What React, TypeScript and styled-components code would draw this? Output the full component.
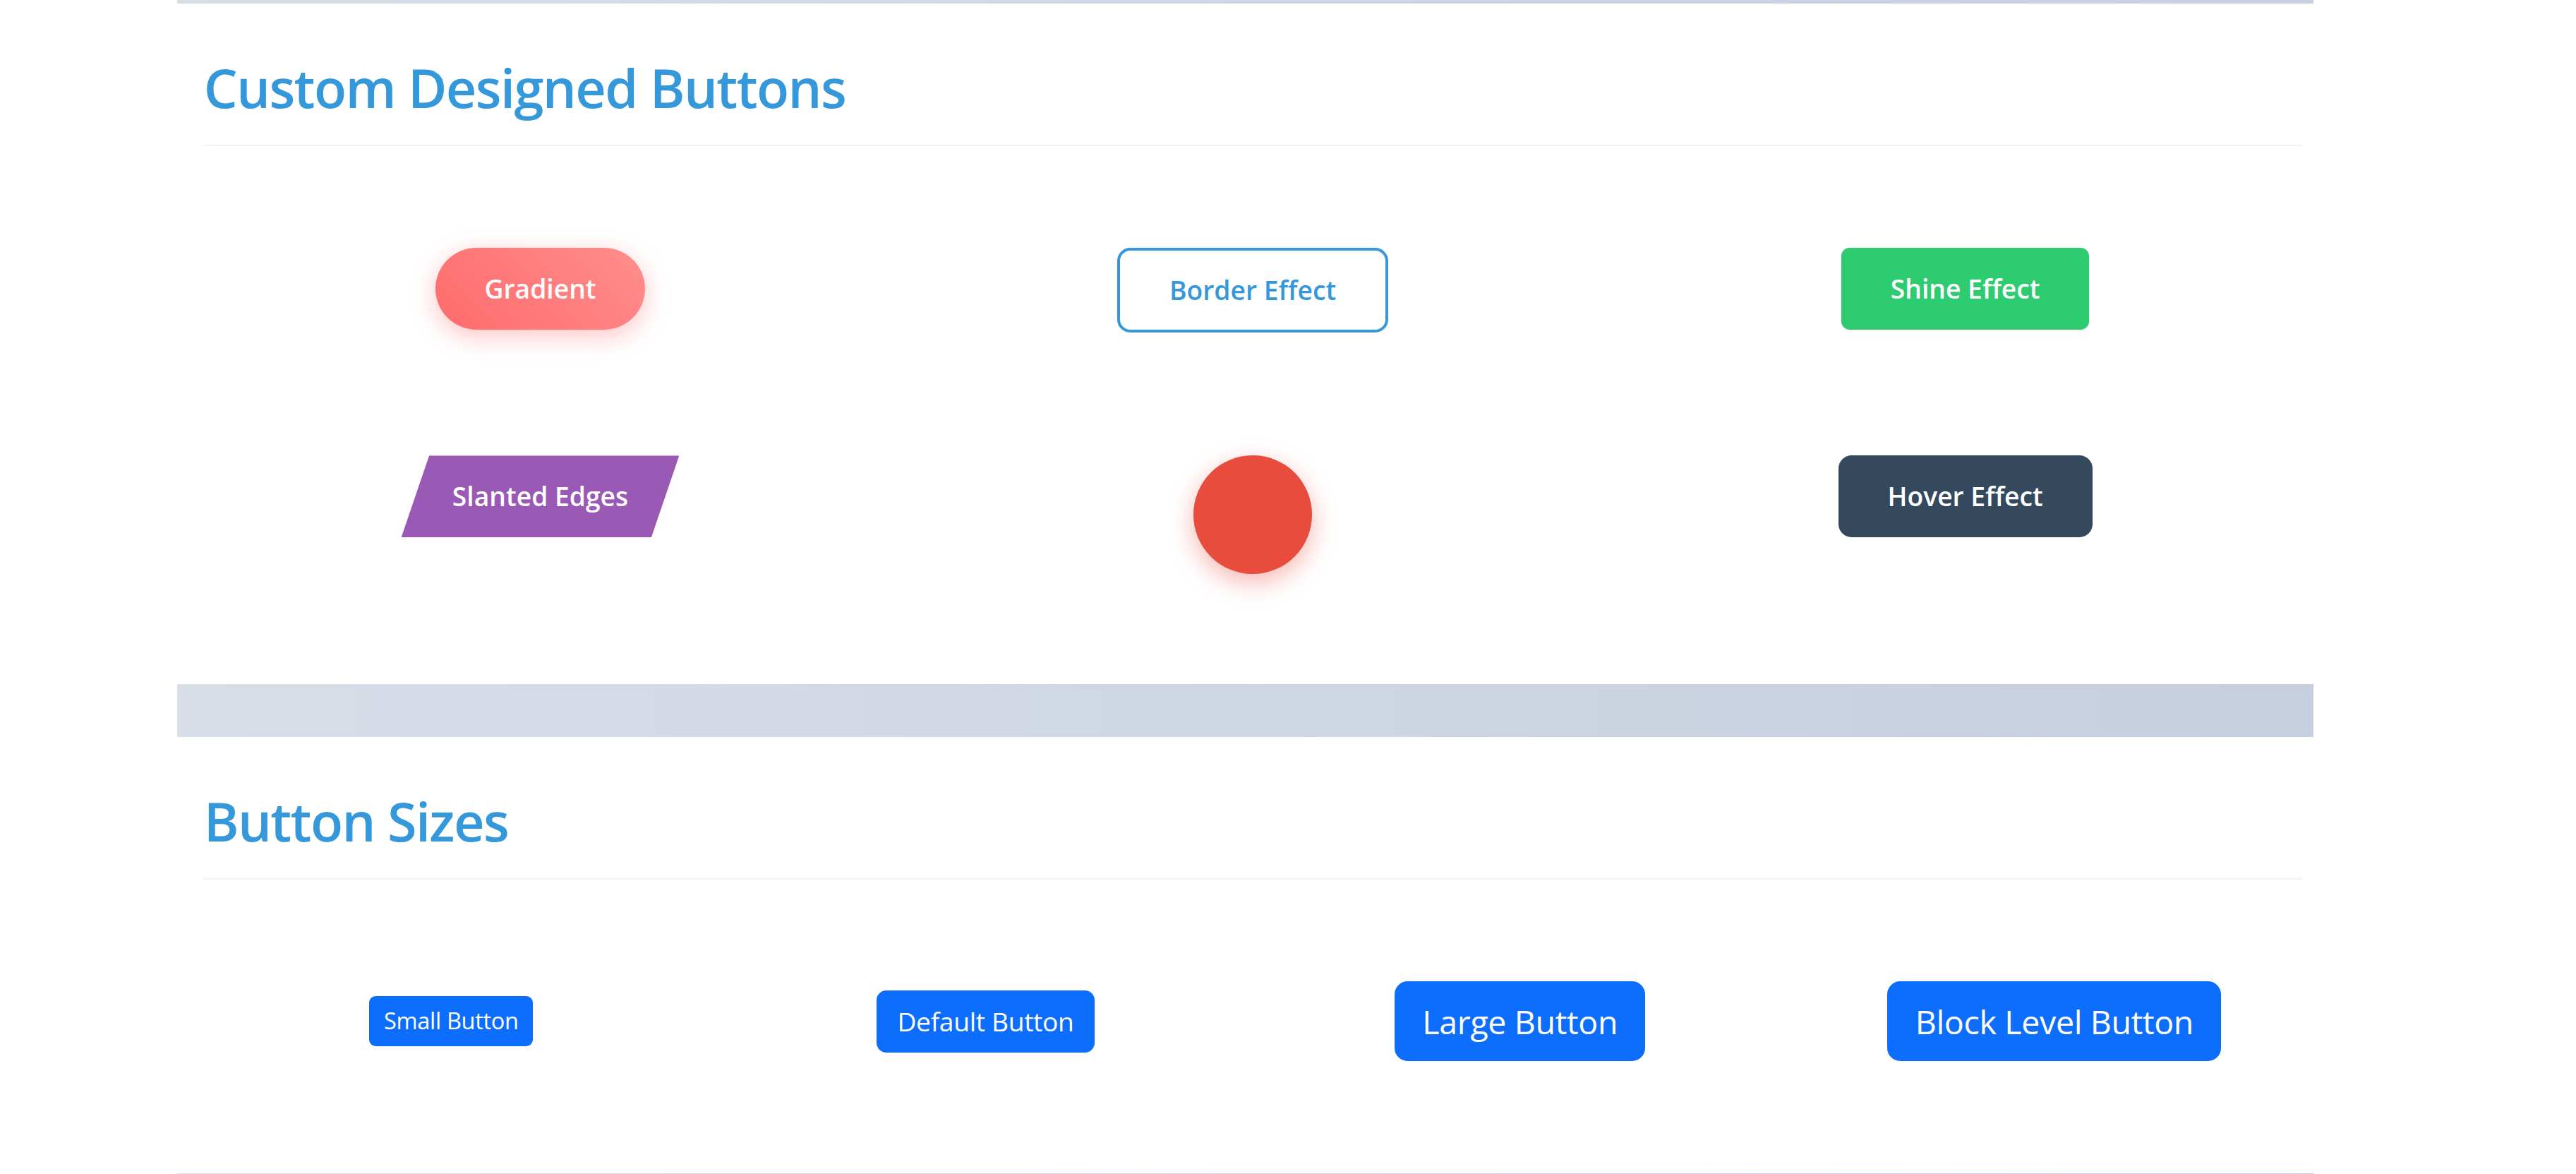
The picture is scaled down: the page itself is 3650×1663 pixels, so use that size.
import React from "react";
import styled, { createGlobalStyle, css } from "styled-components";

const GlobalStyle = createGlobalStyle`
  html, body {
    margin: 0;
    padding: 0;
    background: #ffffff;
  }
  body {
    font-family: "Open Sans", "Noto Sans", sans-serif;
    line-height: 1.6;
    color: #333;
  }
  * {
    box-sizing: border-box;
  }
`;

const Page = styled.div`
  zoom: 2.328;
  width: 1300px;
  margin-left: 108px;
  padding: 2px 0 32px;
  display: flex;
  flex-direction: column;
  gap: 32px;
  background: linear-gradient(90deg, #d8dee8 0%, #c6cfdf 100%);
`;

const Card = styled.section<{ $bottom: number }>`
  background: #ffffff;
  padding: 31px 7px ${p => p.$bottom}px 16px;
`;

const Title = styled.h2`
  margin: 0;
  padding-bottom: 15px;
  font-size: 32.5px;
  line-height: 40px;
  font-weight: 600;
  letter-spacing: -0.7px;
  color: #3498db;
  border-bottom: 1px solid #f1f3f6;
`;

const Grid = styled.div<{ $cols: number; $align: string }>`
  display: grid;
  grid-template-columns: repeat(${p => p.$cols}, 1fr);
  column-gap: 24px;
  row-gap: 75px;
  justify-items: center;
  align-items: ${p => p.$align};
  margin-top: 62px;
`;

const Fancy = styled.button`
  font-family: inherit;
  font-size: 16px;
  font-weight: 600;
  line-height: 25.6px;
  padding: 12px 30px;
  border: none;
  color: #ffffff;
  cursor: pointer;
`;

const GradientButton = styled(Fancy)`
  background: linear-gradient(45deg, #ff6b6b, #ff8e8e);
  border-radius: 50px;
  box-shadow: 0 4px 15px rgba(255, 107, 107, 0.4);
`;

const BorderButton = styled(Fancy)`
  background: transparent;
  color: #3498db;
  border: 2px solid #3498db;
  border-radius: 8px;
  line-height: 24px;
`;

const ShineButton = styled(Fancy)`
  background: #2ecc71;
  border-radius: 5px;
`;

const SlantedButton = styled(Fancy)`
  background: #9b59b6;
  padding: 12px 31px;
  clip-path: polygon(10% 0, 100% 0, 90% 100%, 0 100%);
`;

const CircleButton = styled(Fancy)`
  width: 72px;
  height: 72px;
  padding: 0;
  border-radius: 50%;
  background: #e74c3c;
  box-shadow: 0 5px 15px rgba(231, 76, 60, 0.4);
`;

const HoverButton = styled(Fancy)`
  background: #34495e;
  border-radius: 8px;
`;

const sizes = {
  sm: css`
    padding: 4px 8px;
    font-size: 14px;
    border-radius: 4px;
  `,
  md: css`
    padding: 6px 12px;
    font-size: 16px;
    border-radius: 6px;
  `,
  lg: css`
    padding: 8px 16px;
    font-size: 20px;
    line-height: 31px;
    border-radius: 8px;
  `,
};

const SizeButton = styled.button<{ $size: keyof typeof sizes }>`
  font-family: inherit;
  font-weight: 400;
  line-height: 1.5;
  letter-spacing: -0.15px;
  color: #ffffff;
  background: #0d6efd;
  border: 1px solid #0d6efd;
  cursor: pointer;
  ${p => sizes[p.$size]}
`;

const App = () => {
  return (
    <>
      <GlobalStyle />
      <Page>
        <Card $bottom={67}>
          <Title>Custom Designed Buttons</Title>
          <Grid $cols={3} $align="start">
            <GradientButton>Gradient</GradientButton>
            <BorderButton>Border Effect</BorderButton>
            <ShineButton>Shine Effect</ShineButton>
            <SlantedButton>Slanted Edges</SlantedButton>
            <CircleButton aria-label="Circle" />
            <HoverButton>Hover Effect</HoverButton>
          </Grid>
        </Card>
        <Card $bottom={68}>
          <Title>Button Sizes</Title>
          <Grid $cols={4} $align="center">
            <SizeButton $size="sm">Small Button</SizeButton>
            <SizeButton $size="md">Default Button</SizeButton>
            <SizeButton $size="lg">Large Button</SizeButton>
            <SizeButton $size="lg">Block Level Button</SizeButton>
          </Grid>
        </Card>
      </Page>
    </>
  );
};

export default App;
